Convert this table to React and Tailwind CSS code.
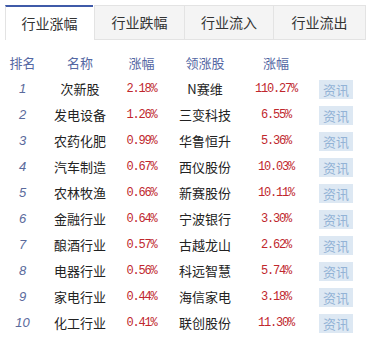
const rows = [
  ["1", "次新股", "2.18%", "N赛维", "110.27%"],
  ["2", "发电设备", "1.26%", "三变科技", "6.55%"],
  ["3", "农药化肥", "0.99%", "华鲁恒升", "5.36%"],
  ["4", "汽车制造", "0.67%", "西仪股份", "10.03%"],
  ["5", "农林牧渔", "0.66%", "新赛股份", "10.11%"],
  ["6", "金融行业", "0.64%", "宁波银行", "3.30%"],
  ["7", "酿酒行业", "0.57%", "古越龙山", "2.62%"],
  ["8", "电器行业", "0.56%", "科远智慧", "5.74%"],
  ["9", "家电行业", "0.44%", "海信家电", "3.18%"],
  ["10", "化工行业", "0.41%", "联创股份", "11.30%"],
];

const cjk = "font-['Noto_Sans_CJK_SC','Noto_Sans',sans-serif]";
const mono = "font-['Liberation_Mono','Noto_Sans_CJK_SC',monospace] text-[12px] tracking-[-1.2px]";

export default function App() {
  return (
    <div className={`w-[369px] h-[338px] bg-white ${cjk}`}>
      <div className="flex pt-[5px] pl-[5px]">
        <div className="w-[88px] h-[35px] border-t-2 border-t-[#3f5aa8] border-l border-l-[#e3e3e3] bg-white flex items-center justify-center text-[14px] text-[#333]">
          行业涨幅
        </div>
        <div className="w-[91px] h-[35px] ml-px border border-[#e3e3e3] bg-[#f4f4f4] flex items-center justify-center text-[14px] text-[#333]">
          行业跌幅
        </div>
        <div className="w-[89px] h-[35px] border border-l-0 border-[#e3e3e3] bg-[#f4f4f4] flex items-center justify-center text-[14px] text-[#333]">
          行业流入
        </div>
        <div className="w-[92px] h-[35px] border border-l-0 border-[#e3e3e3] bg-[#f4f4f4] flex items-center justify-center text-[14px] text-[#333]">
          行业流出
        </div>
      </div>
      <div className="pl-[5px] pt-[10px]">
        <div className="grid grid-cols-[35px_80px_43px_84px_58px_62px] h-[26px] items-center text-center text-[13px] text-[#5467a3]">
          <div>排名</div>
          <div>名称</div>
          <div>涨幅</div>
          <div>领涨股</div>
          <div>涨幅</div>
          <div></div>
        </div>
        {rows.map((r) => (
          <div
            key={r[0]}
            className="grid grid-cols-[35px_80px_43px_84px_58px_62px] h-[26px] items-center text-center text-[13px]"
          >
            <div className="italic text-[#5a6a9c] font-['Liberation_Sans',sans-serif] text-[13px]">{r[0]}</div>
            <div className="text-[#222]">{r[1]}</div>
            <div className={`text-[#c0272d] ${mono}`}>{r[2]}</div>
            <div className="text-[#222]">{r[3]}</div>
            <div className={`text-[#c0272d] ${mono}`}>{r[4]}</div>
            <div className="flex justify-center">
              <div className="w-[34px] h-[19px] bg-[#dde8f3] text-[#93b3d6] text-[13px] leading-[19px]">资讯</div>
            </div>
          </div>
        ))}
      </div>
    </div>
  );
}
